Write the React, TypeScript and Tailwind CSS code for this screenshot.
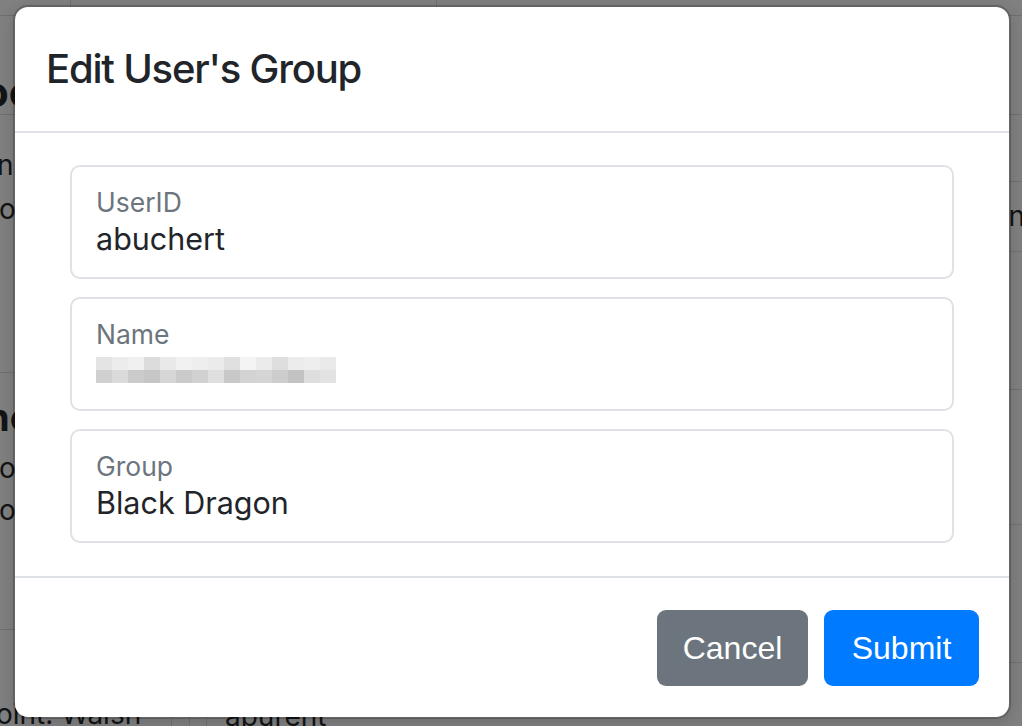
import React from 'react';

const blurTop = [
  'bg-[#e4e4e4]', 'bg-[#ececec]', 'bg-[#f0f0f0]', 'bg-[#dcdcdc]', 'bg-[#e9e9e9]',
  'bg-[#f1f1f1]', 'bg-[#eeeeee]', 'bg-[#ebebeb]', 'bg-[#e0e0e0]', 'bg-[#f4f4f4]',
  'bg-[#ebebeb]', 'bg-[#dedede]', 'bg-[#ececec]', 'bg-[#eeeeee]', 'bg-[#eaeaea]',
];
const blurBottom = [
  'bg-[#d0d0d0]', 'bg-[#dadada]', 'bg-[#cbcbcb]', 'bg-[#c6c6c6]', 'bg-[#d6d6d6]',
  'bg-[#cacaca]', 'bg-[#d1d1d1]', 'bg-[#dfdfdf]', 'bg-[#c8c8c8]', 'bg-[#d3d3d3]',
  'bg-[#d5d5d5]', 'bg-[#cdcdcd]', 'bg-[#c2c2c2]', 'bg-[#dedede]', 'bg-[#e2e2e2]',
];

const Field: React.FC<{ label: string; children: React.ReactNode }> = ({ label, children }) => (
  <div className="h-[114px] rounded-[10px] border-2 border-[#dee2e6] pl-[24px] pt-[19px]">
    <div className="text-[26.5px] leading-[32px] text-[#6c757d]">{label}</div>
    <div className="mt-[1px] h-[40px] text-[30.5px] leading-[40px] text-[#212529]">{children}</div>
  </div>
);

export default function App() {
  return (
    <div className="relative h-[726px] w-[1022px] overflow-hidden bg-[#808080] font-['Inter',sans-serif]">
      {/* dimmed page behind the dialog */}
      <div className="flex h-full text-[#131415]">
        <div className="flex w-[500px] flex-col">
          <div className="flex h-[16px] border-b border-[#6f7072]">
            <div className="w-[71px] border-r border-[#6f7072]" />
            <div className="w-[366px] border-r border-[#6f7072]" />
          </div>
          <div className="h-[99px] whitespace-nowrap border-b border-[#6f7072] pt-[54px] text-[42px] font-bold leading-[44px]">
            <span className="-ml-[17px]">oc</span>
          </div>
          <div className="h-[258px] border-b border-[#6f7072] pt-[28px] text-[28px] leading-[44px]">
            <div className="-ml-[3px]">n</div>
            <div className="-ml-[1px]">o</div>
          </div>
          <div className="h-[257px] whitespace-nowrap border-b border-[#6f7072] pt-[22px]">
            <div className="-ml-[14px] text-[38px] font-bold leading-[44px]">nc</div>
            <div className="mt-[8px] -ml-[1px] text-[28px] leading-[42px]">o</div>
            <div className="-ml-[1px] text-[28px] leading-[42px]">o</div>
          </div>
          <div className="flex flex-1 items-end whitespace-nowrap">
            <div className="w-[172px] border-r border-[#6f7072] text-[28px] leading-[24px]">
              <span className="-ml-[4px]">oint: Walsh</span>
            </div>
            <div className="h-[10px] w-[18px] border-r border-[#6f7072]" />
            <div className="h-[10px] w-[17px] border-r border-[#6f7072]" />
            <div className="pl-[18px] text-[28px] leading-[20px]">apurent</div>
          </div>
        </div>
        <div className="flex flex-1 flex-col">
          <div className="h-[16px] border-b border-[#6f7072]" />
          <div className="h-[99px] border-b border-[#6f7072]" />
          <div className="h-[67px] border-b border-[#6f7072]" />
          <div className="h-[70px] border-b border-[#6f7072] pt-[18px] text-right text-[28px] leading-[32px]">
            <span className="-mr-[3px]">n</span>
          </div>
          <div className="h-[138px] border-b border-[#6f7072]" />
          <div className="h-[135px] border-b border-[#6f7072]" />
          <div className="h-[138px] border-b border-[#6f7072]" />
        </div>
      </div>

      {/* dialog */}
      <div className="absolute left-[13px] top-[5px] flex h-[714px] w-[998px] flex-col rounded-[15px] border-2 border-black/20 bg-white bg-clip-padding shadow-[0_4px_16px_rgba(0,0,0,0.15)]">
        <div className="flex h-[126px] shrink-0 items-center border-b-2 border-[#dee2e6] px-[32px]">
          <h5 className="-ml-[1px] text-[40px] font-medium leading-[60px] tracking-[-0.03em] text-[#212529]">
            Edit User's Group
          </h5>
        </div>

        <div className="flex flex-col gap-[18px] px-[55px] pt-[32px] pb-[33px]">
          <Field label="UserID">abuchert</Field>
          <Field label="Name">
            <div className="flex flex-col pt-[6px]">
              <div className="flex">
                {blurTop.map((c, i) => (
                  <div key={i} className={`h-[13px] w-[16px] ${c}`} />
                ))}
              </div>
              <div className="flex">
                {blurBottom.map((c, i) => (
                  <div key={i} className={`h-[13px] w-[16px] ${c}`} />
                ))}
              </div>
            </div>
          </Field>
          <Field label="Group">Black Dragon</Field>
        </div>

        <div className="flex flex-1 items-start justify-end gap-[16px] border-t-2 border-[#dee2e6] pr-[30px] pt-[32px] font-['Liberation_Sans',Arial,sans-serif]">
          <button className="h-[76px] w-[151px] rounded-[9px] bg-[#6c757d] text-[32px] text-white">
            Cancel
          </button>
          <button className="h-[76px] w-[155px] rounded-[9px] bg-[#007bff] text-[32px] text-white">
            Submit
          </button>
        </div>
      </div>
    </div>
  );
}
